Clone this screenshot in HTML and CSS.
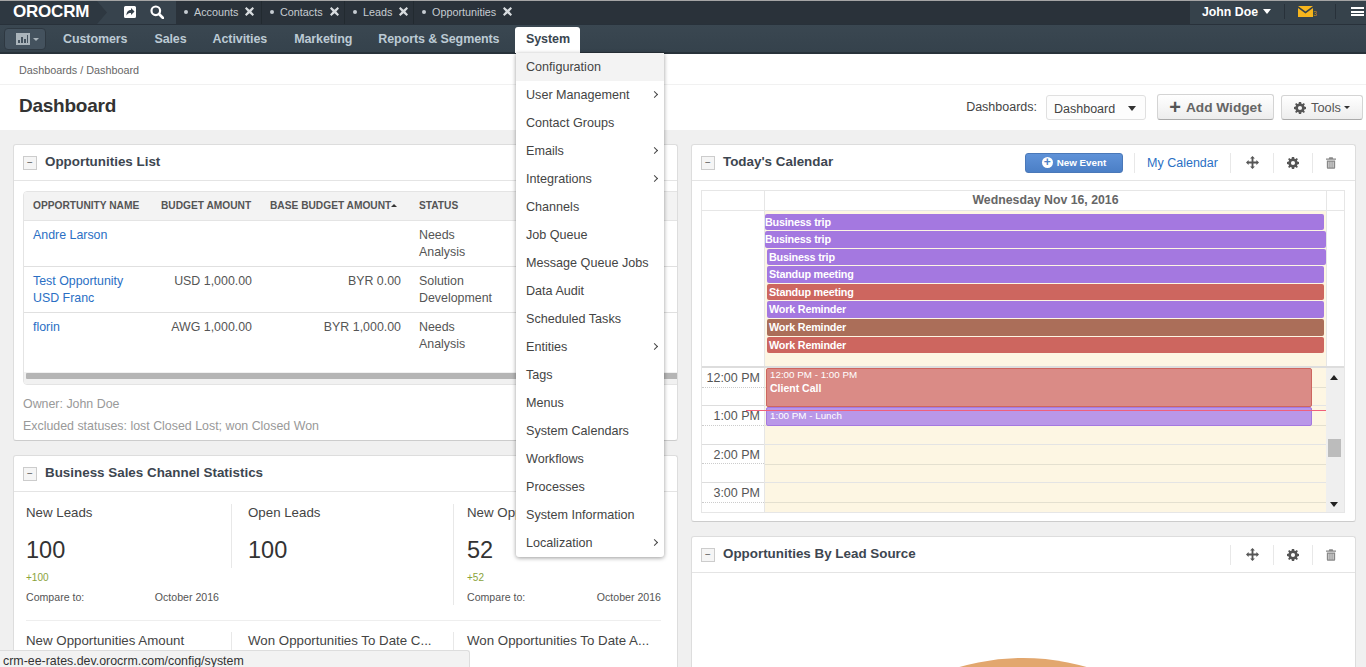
FILE: index.html
```html
<!DOCTYPE html>
<html lang="en">
<head>
<meta charset="utf-8">
<title>Dashboard</title>
<link rel="stylesheet" href="styles.css">
</head>
<body>
<svg class="sprite" width="0" height="0" aria-hidden="true">
  <symbol id="i-move" viewBox="0 0 14 14"><path fill="currentColor" d="M7 0l2.600 2.800H8v3.200h3.200V4.400L14 7l-2.800 2.600V8H8v3.200h1.600L7 14l-2.600-2.800H6V8H2.800v1.600L0 7l2.800-2.600V6H6V2.800H4.400z"/></symbol>
  <symbol id="i-gear" viewBox="0 0 14 14"><path fill="currentColor" fill-rule="evenodd" d="M5.700 0h2.600l.4 1.900 1.200.5 1.600-1.100 1.200 1.200-1.100 1.600.5 1.200 1.900.4v2.600l-1.900.4-.5 1.200 1.100 1.600-1.200 1.200-1.600-1.100-1.200.5-.4 1.900H5.700l-.4-1.900-1.200-.5-1.600 1.100-1.200-1.200 1.100-1.600-.5-1.200L0 8.300V5.700l1.900-.4.5-1.200-1.100-1.600 1.200-1.200 1.600 1.100 1.200-.5zM7 4.600a2.400 2.400 0 1 0 0 4.800 2.400 2.400 0 0 0 0-4.800z"/></symbol>
  <symbol id="i-trash" viewBox="0 0 12 14"><path fill="currentColor" fill-rule="evenodd" d="M4 0h4l.7 1.500H12V3H0V1.500h3.300zM1 4h10v8.500c0 .8-.6 1.500-1.400 1.500H2.400C1.600 14 1 13.300 1 12.500zm2 1.500v7h1v-7zm2.500 0v7h1v-7zm2.500 0v7h1v-7z"/></symbol>
  <symbol id="i-x" viewBox="0 0 10 10"><path fill="currentColor" d="M1.500 0L5 3l3.500-3L10 1.600 7 5l3 3.400L8.500 10 5 7l-3.500 3L0 8.400 3 5 0 1.600z"/></symbol>
</svg>

<header class="topbar">
  <div class="logo">OROCRM</div>
  <div class="quick">
    <svg class="ico-share" viewBox="0 0 14 14"><path fill="#fff" fill-rule="evenodd" d="M2.500 1h9A1.500 1.500 0 0 1 13 2.500v9a1.500 1.500 0 0 1-1.500 1.500h-9A1.500 1.500 0 0 1 1 11.500v-9A1.500 1.500 0 0 1 2.500 1zM8 3v2C5.500 5 3.500 6.500 3.500 10.500 4.500 8.500 6 8 8 8v2l3.500-3.500z"/></svg>
    <svg class="ico-search" viewBox="0 0 14 14"><circle cx="5.800" cy="5.800" r="4.300" fill="none" stroke="#fff" stroke-width="2.200"/><path d="M9 9l4 4" stroke="#fff" stroke-width="2.600" stroke-linecap="round"/></svg>
  </div>
  <nav class="pins">
    <div class="pin pin-a"><span class="dot"></span>Accounts<svg class="pin-x"><use href="#i-x"/></svg></div>
    <div class="pin pin-c"><span class="dot"></span>Contacts<svg class="pin-x"><use href="#i-x"/></svg></div>
    <div class="pin pin-l"><span class="dot"></span>Leads<svg class="pin-x"><use href="#i-x"/></svg></div>
    <div class="pin pin-o"><span class="dot"></span>Opportunities<svg class="pin-x"><use href="#i-x"/></svg></div>
  </nav>
  <div class="usermenu">
    <div class="user">John Doe<span class="caret-w"></span></div>
    <div class="mail">
      <svg class="ico-mail" viewBox="0 0 15 11"><path fill="#f7b51d" d="M0 0h15L7.500 5.500zM0 2l7.500 5.500L15 2v9H0z"/></svg><span class="mail-n">3</span>
    </div>
    <div class="burger"><span></span><span></span><span></span></div>
  </div>
</header>

<nav class="mainnav">
  <button class="dash-btn">
    <svg class="ico-chart" viewBox="0 0 14 12"><path fill="#aab4bb" fill-rule="evenodd" d="M0 0h14v12H0zM2 7v3h2V7zm3-3v6h2V4zm3 2v4h2V6zm3-4v8h1V2z"/></svg><span class="caret-g"></span>
  </button>
  <a class="nav-item nav-cust">Customers</a>
  <a class="nav-item nav-sales">Sales</a>
  <a class="nav-item nav-act">Activities</a>
  <a class="nav-item nav-mark">Marketing</a>
  <a class="nav-item nav-rep">Reports &amp; Segments</a>
  <a class="nav-item active">System</a>
</nav>

<div class="crumbs">Dashboards / Dashboard</div>

<div class="pagehead">
  <h1>Dashboard</h1>
  <div class="head-tools">
    <span class="dash-label">Dashboards:</span>
    <div class="select">Dashboard<span class="caret-d"></span></div>
    <button class="btn btn-add"><span class="plus">+</span> Add Widget</button>
    <button class="btn btn-tools"><svg class="ico-sm"><use href="#i-gear"/></svg>Tools<span class="caret-s"></span></button>
  </div>
</div>

<main class="board">
  <div class="col">
    <section class="widget w-opps">
      <div class="w-head">
        <span class="collapse">−</span><h2>Opportunities List</h2>
      </div>
      <div class="w-body opps-body">
        <div class="gridbox">
          <table class="grid">
            <colgroup><col class="c1"><col class="c2"><col class="c3"><col class="c4"><col class="c5"></colgroup>
            <thead>
              <tr><th>OPPORTUNITY NAME</th><th>BUDGET AMOUNT</th><th class="th-sort">BASE BUDGET AMOUNT<span class="sort"></span></th><th>STATUS</th><th>PROBABILITY</th></tr>
            </thead>
            <tbody>
              <tr><td><a>Andre Larson</a></td><td class="num"></td><td class="num"></td><td>Needs Analysis</td><td></td></tr>
              <tr><td><a>Test Opportunity USD Franc</a></td><td class="num">USD 1,000.00</td><td class="num">BYR 0.00</td><td>Solution Development</td><td></td></tr>
              <tr class="last"><td><a>florin</a></td><td class="num">AWG 1,000.00</td><td class="num">BYR 1,000.00</td><td>Needs Analysis</td><td></td></tr>
            </tbody>
          </table>
          <div class="hscroll"><div class="hthumb"></div></div>
        </div>
        <p class="note note-owner">Owner: John Doe</p>
        <p class="note">Excluded statuses: lost Closed Lost; won Closed Won</p>
      </div>
    </section>

    <section class="widget w-stats">
      <div class="w-head">
        <span class="collapse">−</span><h2>Business Sales Channel Statistics</h2>
      </div>
      <div class="w-body stats-body">
        <div class="stats">
          <div class="stat stat-first">
            <div class="s-label">New Leads</div>
            <div class="s-val">100</div>
            <div class="s-delta">+100</div>
            <div class="s-cmp"><span>Compare to:</span><span>October 2016</span></div>
          </div>
          <div class="stat stat-mid">
            <div class="s-label">Open Leads</div>
            <div class="s-val">100</div>
          </div>
          <div class="stat stat-last">
            <div class="s-label">New Opportunities</div>
            <div class="s-val">52</div>
            <div class="s-delta">+52</div>
            <div class="s-cmp"><span>Compare to:</span><span>October 2016</span></div>
          </div>
        </div>
        <div class="stats stats-2">
          <div class="stat stat-first"><div class="s-label">New Opportunities Amount</div></div>
          <div class="stat stat-mid"><div class="s-label">Won Opportunities To Date C...</div></div>
          <div class="stat stat-last"><div class="s-label">Won Opportunities To Date A...</div></div>
        </div>
      </div>
    </section>
  </div>

  <div class="col">
    <section class="widget w-cal">
      <div class="w-head">
        <span class="collapse">−</span><h2>Today's Calendar</h2>
        <div class="w-actions">
          <button class="btn-event"><span class="ev-plus">+</span>New Event</button>
          <span class="act act-link">My Calendar</span>
          <span class="act act-move"><svg class="a-move"><use href="#i-move"/></svg></span>
          <span class="act act-gear"><svg class="a-gear"><use href="#i-gear"/></svg></span>
          <span class="act act-end"><svg class="a-trash"><use href="#i-trash"/></svg></span>
        </div>
      </div>
      <div class="calendar">
        <div class="cal-top">
          <div class="cal-gut"></div>
          <div class="cal-day">Wednesday Nov 16, 2016</div>
          <div class="cal-end"></div>
        </div>
        <div class="cal-allday">
          <div class="cal-gut"></div>
          <div class="allday-list">
            <div class="ev purple e-a">Business trip</div>
            <div class="ev purple e-b">Business trip</div>
            <div class="ev purple e-c">Business trip</div>
            <div class="ev purple">Standup meeting</div>
            <div class="ev red">Standup meeting</div>
            <div class="ev purple">Work Reminder</div>
            <div class="ev brown">Work Reminder</div>
            <div class="ev red">Work Reminder</div>
          </div>
          <div class="cal-end"></div>
        </div>
        <div class="cal-time">
          <div class="hours">
            <div class="hour"><div class="h-lab">12:00 PM</div><div class="h-half"></div></div>
            <div class="hour"><div class="h-lab">1:00 PM</div><div class="h-half"></div></div>
            <div class="hour"><div class="h-lab">2:00 PM</div><div class="h-half"></div></div>
            <div class="hour"><div class="h-lab">3:00 PM</div><div class="h-half"></div></div>
          </div>
          <div class="slots">
            <div class="slot"></div><div class="slot"></div><div class="slot"></div><div class="slot"></div>
            <div class="tev tev-call"><span class="t-time">12:00 PM - 1:00 PM</span><span class="t-name">Client Call</span></div>
            <div class="tev tev-lunch"><span class="t-time">1:00 PM - Lunch</span></div>
          </div>
          <div class="vscroll"><span class="up"></span><span class="thumb"></span><span class="down"></span></div>
          <div class="nowline"></div>
        </div>
      </div>
    </section>

    <section class="widget w-lead">
      <div class="w-head">
        <span class="collapse">−</span><h2>Opportunities By Lead Source</h2>
        <div class="w-actions">
          <span class="act act-move"><svg class="a-move"><use href="#i-move"/></svg></span>
          <span class="act act-gear"><svg class="a-gear"><use href="#i-gear"/></svg></span>
          <span class="act act-end"><svg class="a-trash"><use href="#i-trash"/></svg></span>
        </div>
      </div>
      <div class="w-body lead-body"><div class="pie"></div></div>
    </section>
  </div>
</main>

<ul class="dropdown">
  <li class="hover">Configuration</li>
  <li class="sub">User Management</li>
  <li>Contact Groups</li>
  <li class="sub">Emails</li>
  <li class="sub">Integrations</li>
  <li>Channels</li>
  <li>Job Queue</li>
  <li>Message Queue Jobs</li>
  <li>Data Audit</li>
  <li>Scheduled Tasks</li>
  <li class="sub">Entities</li>
  <li>Tags</li>
  <li>Menus</li>
  <li>System Calendars</li>
  <li>Workflows</li>
  <li>Processes</li>
  <li>System Information</li>
  <li class="sub">Localization</li>
</ul>

<div class="statusbar">crm-ee-rates.dev.orocrm.com/config/system</div>
</body>
</html>
```

FILE: styles.css
```css
* { box-sizing: border-box; }
html, body { margin: 0; height: 667px; overflow: hidden; }
body { font-family: "Liberation Sans", Arial, sans-serif; color: #444; background: #f0f0f0; font-size: 12px; position: relative; }
.sprite { position: absolute; }
h1, h2, p, ul { margin: 0; padding: 0; }

/* top bar */
.topbar { height: 25px; background: #2a323a; border-top: 1px solid #a5a5a5; border-bottom: 1px solid #28313a; display: flex; align-items: stretch; color: #fff; }
.logo { width: 107px; padding-left: 13px; font-weight: bold; font-size: 17px; letter-spacing: -0.200px; line-height: 21px; background: #2e3841; clip-path: polygon(0 0, 97px 0, 107px 50%, 97px 100%, 0 100%); margin-right: -10px; position: relative; z-index: 1; }
.quick { width: 79px; display: flex; align-items: center; gap: 13px; padding: 0 0 2px 26px; background: #37434d; }
.ico-share { width: 14px; height: 14px; }
.ico-search { width: 14px; height: 14px; }
.pins { display: flex; }
.pin { display: flex; align-items: center; font-size: 10.800px; color: #c6ccd1; border-right: 1px solid #222a30; padding: 0 0 2px 8px; }
.pin-a { width: 86px; }
.pin-c { width: 83px; }
.pin-l { width: 69px; }
.pin-o { width: 105px; border-right: 0; }
.dot { width: 4px; height: 4px; border-radius: 50%; background: #c6ccd1; margin-right: 6px; flex: none; }
.pin-x { width: 9px; height: 9px; margin-left: 7px; color: #d8dcdf; flex: none; }
.usermenu { margin-left: auto; display: flex; align-items: center; width: 176px; background: #36424b; padding-bottom: 2px; }
.user { width: 94px; padding-left: 12px; font-size: 12.300px; font-weight: bold; color: #fff; display: flex; align-items: center; }
.caret-w { border: 4.500px solid transparent; border-top: 5px solid #fff; border-bottom: 0; margin-left: 5px; }
.mail { height: 15px; width: 52px; border-left: 1px solid #28313a; border-right: 1px solid #28313a; display: flex; align-items: center; padding-left: 13px; }
.ico-mail { width: 15px; height: 11px; }
.mail-n { font-size: 7px; color: #c98f1a; margin-top: 3px; }
.burger { flex: none; width: 30px; padding-left: 15px; display: flex; flex-direction: column; gap: 1.500px; }
.burger span { display: block; height: 2px; width: 13px; background: #fff; }

/* main nav */
.mainnav { height: 29px; background: linear-gradient(#3a4751, #35424c); border-bottom: 2px solid #28323a; display: flex; align-items: flex-start; padding-left: 4px; position: relative; }
.dash-btn { width: 42px; height: 22px; margin-top: 3px; background: #44525e; border: 1px solid #2e3841; border-radius: 4px; padding: 0 0 0 11px; display: flex; align-items: center; }
.ico-chart { width: 14px; height: 12px; }
.caret-g { border: 3px solid transparent; border-top: 3.500px solid #aab4bb; border-bottom: 0; margin-left: 3px; }
.nav-item { font-weight: bold; font-size: 12.500px; letter-spacing: -0.100px; line-height: 29px; color: #bccad4; }
.nav-cust { margin-left: 17px; }
.nav-sales { margin-left: 27px; }
.nav-act { margin-left: 26px; }
.nav-mark { margin-left: 27px; }
.nav-rep { margin-left: 26px; }
.nav-item.active { margin: 2px 0 -2px 16px; width: 65px; height: 26px; line-height: 25px; background: #fff; color: #3a4650; text-align: center; border-radius: 3px 3px 0 0; }

/* breadcrumbs and page head */
.crumbs { height: 31px; background: #fff; border-bottom: 1px solid #f1f1f1; padding: 10px 0 0 19px; font-size: 10.800px; color: #666; line-height: 12px; }
.pagehead { height: 45px; background: #fff; display: flex; align-items: flex-start; justify-content: space-between; padding: 9px 3px 0 19px; }
h1 { font-size: 19px; letter-spacing: -0.250px; line-height: 24px; font-weight: bold; color: #333; }
.head-tools { display: flex; align-items: flex-start; }
.dash-label { font-size: 12.500px; line-height: 27px; margin-right: 9px; }
.select { width: 100px; height: 25px; margin-top: 1px; border: 1px solid #e0e0e0; border-radius: 3px; padding-left: 7px; font-size: 12.500px; line-height: 26px; position: relative; background: #fdfdfd; margin-right: 11px; }
.caret-d { position: absolute; right: 9px; top: 10px; border: 4px solid transparent; border-top: 5px solid #333; border-bottom: 0; }
.btn { height: 26px; border: 1px solid #d4d4d4; border-bottom-color: #aaa; border-radius: 3px; background: linear-gradient(#fff, #ededed); color: #555; font-family: inherit; display: flex; align-items: center; justify-content: center; padding: 0; }
.btn-add { width: 117px; font-size: 13.700px; font-weight: bold; color: #666; margin-right: 7px; }
.plus { font-size: 20px; line-height: 20px; margin-right: 5px; color: #555; }
.btn-tools { width: 82px; font-size: 12.800px; margin-top: 1px; height: 25px; }
.ico-sm { width: 12px; height: 12px; margin-right: 5px; color: #555; }
.caret-s { border: 3px solid transparent; border-top: 3.500px solid #333; border-bottom: 0; margin-left: 3px; }

/* board */
.board { display: grid; grid-template-columns: 665px 665px; column-gap: 13px; padding: 14px 0 0 13px; height: 537px; overflow: hidden; }
.col { display: flex; flex-direction: column; gap: 14px; min-width: 0; }
.widget { background: #fff; border: 1px solid #ddd; border-bottom-color: #ccc; border-radius: 3px; flex: none; overflow: hidden; }
.w-head { height: 36px; border-bottom: 1px solid #e4e4e4; display: flex; align-items: center; padding-left: 9px; }
.collapse { width: 14px; height: 14px; border: 1px solid #ccc; background: #f5f5f5; font-size: 10px; line-height: 12px; text-align: center; color: #555; flex: none; }
h2 { font-size: 13.400px; font-weight: bold; color: #3d4650; margin: -2px 0 0 8px; }
.w-actions { margin-left: auto; display: flex; align-items: center; }
.act { height: 20px; display: flex; align-items: center; justify-content: center; border-left: 1px solid #e8e8e8; color: #555; }
.act-link { color: #2a6fc4; font-size: 12.500px; width: 96px; }
.act-move { width: 43px; }
.act-gear { width: 39px; }
.act-end { width: 37px; color: #888; margin-right: 6px; }
.a-move { width: 13px; height: 13px; }
.a-gear { width: 12px; height: 12px; }
.a-trash { width: 10px; height: 12px; }
.btn-event { width: 98px; height: 20px; border: 1px solid #4a78b8; border-radius: 3px; background: linear-gradient(#5f92d8, #4b7fc6); color: #fff; font-family: inherit; font-size: 9.800px; font-weight: bold; display: flex; align-items: center; justify-content: center; padding: 0; margin-right: 11px; }
.ev-plus { width: 11px; height: 11px; border-radius: 50%; background: #fff; color: #4b7fc6; font-size: 12px; line-height: 10px; margin-right: 4px; }

/* opportunities list */
.w-opps { height: 297px; }
.opps-body { padding: 10px 0 0 9px; }
.gridbox { width: 700px; height: 194px; border: 1px solid #e4e4e4; border-radius: 4px; overflow: hidden; position: relative; }
.grid { border-collapse: collapse; table-layout: fixed; width: 698px; }
.c1 { width: 128px; } .c2 { width: 109px; } .c3 { width: 149px; } .c4 { width: 100px; } .c5 { width: 212px; }
.grid th { height: 28px; background: #f3f3f3; font-size: 10.200px; font-weight: bold; color: #555; text-align: left; padding: 0 9px; border-bottom: 1px solid #e4e4e4; white-space: nowrap; }
.th-sort { position: relative; }
.sort { display: inline-block; border: 3px solid transparent; border-bottom: 3px solid #333; border-top: 0; vertical-align: 2px; }
.grid td { vertical-align: top; padding: 6px 9px 4px; font-size: 12.400px; line-height: 17.500px; border-bottom: 1px solid #e0e0e0; height: 45.500px; color: #555; }
.grid .last td { border-bottom: 0; height: 60px; }
.grid a { color: #2a6fc4; }
.num { text-align: right; }
.hscroll { position: absolute; left: 0; right: 0; bottom: 0; height: 12px; background: #f1f1f1; padding: 1px 2px; }
.hthumb { height: 6px; background: #b5b5b5; border-radius: 1px; }
.note { font-size: 12.400px; color: #999; line-height: 16px; margin-top: 6px; }
.note-owner { margin-top: 11px; }

/* statistics */
.w-stats { height: 300px; }
.stats-body { padding: 12px 16px 0 12px; }
.stats { display: grid; grid-template-columns: 206px 221px 1fr; border-bottom: 1px solid #eee; height: 117px; }
.stats-2 { border-bottom: 0; margin-top: 11px; white-space: nowrap; }
.stat { color: #444; position: relative; }
.stat-first { padding-right: 13px; }
.stat-first::after { content: ""; position: absolute; right: 0; top: 0; width: 1px; height: 64px; background: #e8e8e8; }
.stat-mid { padding-left: 16px; }
.stat-last { padding-left: 13px; border-left: 1px solid #e8e8e8; height: 101px; }
.s-label { font-size: 13.300px; line-height: 18px; }
.s-val { font-size: 23.500px; line-height: 28px; margin-top: 14px; color: #333; }
.s-delta { font-size: 10px; color: #8aa33a; line-height: 12px; margin-top: 8px; }
.s-cmp { font-size: 10.600px; line-height: 12px; margin-top: 7px; display: flex; justify-content: space-between; color: #555; }

/* calendar */
.w-cal { height: 378px; }
.calendar { margin: 9px 0 0 9px; width: 644px; border: 1px solid #e6e6e6; }
.cal-top { display: flex; height: 20px; border-bottom: 1px solid #e6e6e6; }
.cal-gut { width: 62px; flex: none; background: #fff; }
.cal-end { width: 18px; flex: none; border-left: 1px solid #e6e6e6; }
.cal-day { flex: 1; border-left: 1px solid #e6e6e6; text-align: center; font-size: 12.300px; font-weight: bold; color: #666; line-height: 18px; }
.cal-allday { display: flex; height: 157px; border-bottom: 2px solid #ddd; }
.allday-list { flex: 1; background: #fdf6e3; border-left: 1px solid #e6e6e6; padding: 2.500px 2px 0 0; display: flex; flex-direction: column; gap: 1px; }
.ev { height: 16.600px; margin-left: 2px; border-radius: 2px; color: #fff; font-size: 10.800px; font-weight: bold; line-height: 17px; padding-left: 2px; letter-spacing: -0.200px; }
.e-a { margin-left: 0; padding-left: 0; }
.e-b { margin-left: 0; margin-right: -2px; padding-left: 0; }
.e-c { margin-right: -2px; }
.purple { background: #a478e0; }
.red { background: #cd665f; }
.brown { background: #ab6e59; }
.cal-time { display: flex; height: 144px; overflow: hidden; position: relative; }
.hours { width: 62px; flex: none; background: #fff; }
.hour { height: 38.400px; border-bottom: 1px solid #ddd; }
.h-lab { height: 19.500px; text-align: right; padding-right: 4px; font-size: 12.500px; line-height: 21px; border-bottom: 1px dotted #ccc; color: #555; }
.slots { flex: 1; background: #fdf6e3; border-left: 1px solid #e6e6e6; position: relative; }
.slot { height: 38.400px; border-bottom: 1px solid #e4e4e4; background: linear-gradient(transparent 19px, #e4e0d0 19px, #e4e0d0 20px, transparent 20px); }
.tev { position: absolute; left: 1px; width: 546px; border: 1px solid; border-radius: 2px; color: #fff; padding-left: 3px; display: flex; flex-direction: column; }
.tev-call { top: 0; height: 39px; background: #da8b86; border-color: #cd665f; }
.tev-lunch { top: 39px; height: 19px; background: #b997e8; border-color: #a478e0; padding-top: 2px; }
.t-time { font-size: 9.800px; line-height: 12px; }
.t-name { font-size: 10.500px; font-weight: bold; line-height: 14px; }
.vscroll { width: 18px; flex: none; background: #efefef; position: relative; }
.up { position: absolute; top: 7px; left: 4px; border: 4px solid transparent; border-bottom: 5px solid #222; border-top: 0; }
.down { position: absolute; bottom: 5px; left: 4px; border: 4px solid transparent; border-top: 5px solid #222; border-bottom: 0; }
.thumb { position: absolute; top: 71px; left: 2px; width: 13px; height: 18px; background: #bcbcbc; }
.nowline { position: absolute; left: 44px; right: 18px; top: 42px; height: 1px; background: #f0607a; }

/* lead source */
.w-lead { height: 160px; }
.lead-body { padding-top: 85px; }
.pie { width: 458px; height: 458px; border-radius: 50%; background: #e2a76e; margin-left: 102px; }

/* dropdown */
.dropdown { position: absolute; left: 516px; top: 53px; width: 148px; height: 504px; background: #fff; list-style: none; box-shadow: 0 1px 4px rgba(0,0,0,.4); border-radius: 0 0 3px 3px; }
.dropdown li { height: 28px; line-height: 28px; padding-left: 10px; font-size: 12.600px; color: #444; position: relative; }
.dropdown .hover { background: #f3f3f3; }
.dropdown .sub::after { content: ""; position: absolute; right: 7px; top: 11px; width: 4px; height: 4px; border-top: 1.500px solid #444; border-right: 1.500px solid #444; transform: rotate(45deg); }

/* status bar */
.statusbar { position: absolute; left: 0; bottom: 0; width: 470px; height: 17px; background: #f2f2f2; border: 1px solid #ddd; border-left: 0; border-bottom: 0; border-radius: 0 3px 0 0; font-size: 12.400px; line-height: 21px; padding-left: 3px; color: #333; overflow: hidden; }
```
